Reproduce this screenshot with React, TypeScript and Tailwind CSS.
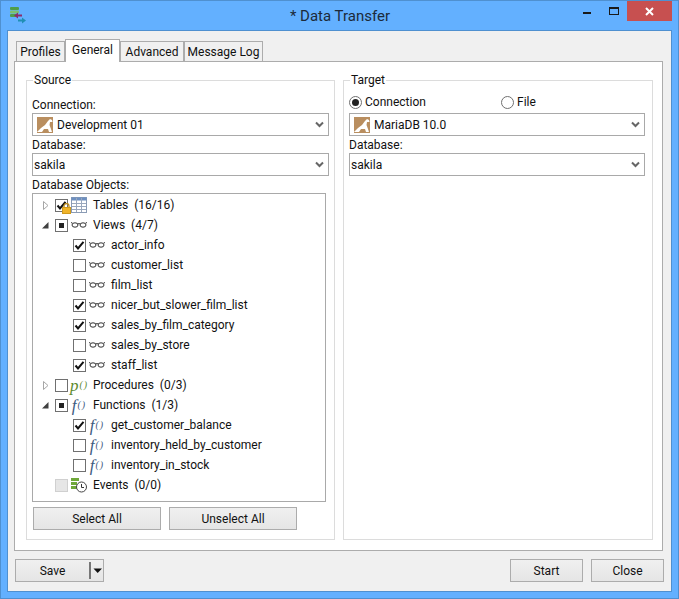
import type { ReactNode } from 'react';

type CheckState = 'on' | 'off' | 'partial' | 'disabled';
type IconKind = 'table' | 'view' | 'proc' | 'func' | 'event';

interface TreeRow {
  label: string;
  icon: IconKind;
  check: CheckState;
  child?: boolean;
  arrow?: 'open' | 'closed';
}

const rows: TreeRow[] = [
  { label: 'Tables  (16/16)', icon: 'table', check: 'on', arrow: 'closed' },
  { label: 'Views  (4/7)', icon: 'view', check: 'partial', arrow: 'open' },
  { label: 'actor_info', icon: 'view', check: 'on', child: true },
  { label: 'customer_list', icon: 'view', check: 'off', child: true },
  { label: 'film_list', icon: 'view', check: 'off', child: true },
  { label: 'nicer_but_slower_film_list', icon: 'view', check: 'on', child: true },
  { label: 'sales_by_film_category', icon: 'view', check: 'on', child: true },
  { label: 'sales_by_store', icon: 'view', check: 'off', child: true },
  { label: 'staff_list', icon: 'view', check: 'on', child: true },
  { label: 'Procedures  (0/3)', icon: 'proc', check: 'off', arrow: 'closed' },
  { label: 'Functions  (1/3)', icon: 'func', check: 'partial', arrow: 'open' },
  { label: 'get_customer_balance', icon: 'func', check: 'on', child: true },
  { label: 'inventory_held_by_customer', icon: 'func', check: 'off', child: true },
  { label: 'inventory_in_stock', icon: 'func', check: 'off', child: true },
  { label: 'Events  (0/0)', icon: 'event', check: 'disabled' },
];

function Walrus() {
  return (
    <svg width="16" height="16" viewBox="0 0 16 16" className="shrink-0">
      <rect width="16" height="16" fill="#b98e5f" />
      <path
        d="M0 15 L4 11 L8 8 L11 4 L13 2 L15 3 L15.5 5 L13 5 L12.5 8 L14 12 L15 15 L12 15 L11 12 L7 12 L5 15 Z"
        fill="#fff"
      />
    </svg>
  );
}

function Chevron() {
  return (
    <svg width="9" height="7" viewBox="0 0 9 7" className="shrink-0">
      <path d="M1 1.5 L4.5 5 L8 1.5" fill="none" stroke="#666" strokeWidth="2" />
    </svg>
  );
}

function Combo({ children, icon }: { children: ReactNode; icon?: boolean }) {
  return (
    <div className="flex h-[23px] items-center border border-[#a9a9a9] bg-white pr-[4px] pl-[1px]">
      {icon ? (
        <div className="ml-[3px] mr-[4px]">
          <Walrus />
        </div>
      ) : null}
      <span className="flex-1 leading-[20px]">{children}</span>
      <Chevron />
    </div>
  );
}

function Button({ children, className = '' }: { children: ReactNode; className?: string }) {
  return (
    <div
      className={`flex h-[23px] items-center justify-center border border-[#acacac] bg-gradient-to-b from-[#f0f0f0] to-[#e5e5e5] ${className}`}
    >
      {children}
    </div>
  );
}

function CheckBox({ state }: { state: CheckState }) {
  const border = state === 'disabled' ? 'border-[#d0d0d0] bg-[#e6e6e6]' : 'border-[#707070] bg-white';
  return (
    <div className={`relative flex h-[13px] w-[13px] shrink-0 items-center justify-center border ${border}`}>
      {state === 'on' ? (
        <svg width="13" height="13" viewBox="0 0 13 13" className="absolute -top-px -left-px">
          <path d="M2.5 6.5 L5 9.5 L10.5 2.8" fill="none" stroke="#111" strokeWidth="2" />
        </svg>
      ) : null}
      {state === 'partial' ? <div className="h-[5px] w-[5px] bg-[#222]" /> : null}
    </div>
  );
}

function RowIcon({ kind }: { kind: IconKind }) {
  if (kind === 'table') {
    return (
      <svg width="16" height="16" viewBox="0 0 16 16">
        <rect x="0.5" y="0.5" width="15" height="15" fill="#fff" stroke="#8a9bb5" />
        <rect x="0.5" y="0.5" width="15" height="3" fill="#6d8fc0" />
        <path d="M5.5 1 V15 M10.5 1 V15 M1 6.5 H15 M1 9.5 H15 M1 12.5 H15" stroke="#9aa8bd" />
      </svg>
    );
  }
  if (kind === 'view') {
    return (
      <svg width="16" height="16" viewBox="0 0 16 16">
        <path d="M1 6.5 L0.5 5 M15 6.5 L15.5 5 M6.5 7 Q8 6 9.5 7" fill="none" stroke="#444" />
        <ellipse cx="4" cy="8" rx="3" ry="2.2" fill="none" stroke="#333" />
        <ellipse cx="12" cy="8" rx="3" ry="2.2" fill="none" stroke="#333" />
      </svg>
    );
  }
  if (kind === 'event') {
    return (
      <svg width="16" height="16" viewBox="0 0 16 16">
        <rect x="0" y="1" width="8" height="3" fill="#6fa83a" />
        <rect x="0" y="5" width="6" height="3" fill="#6fa83a" />
        <rect x="0" y="9" width="6" height="3" fill="#6fa83a" />
        <circle cx="10.5" cy="10" r="5" fill="#fff" stroke="#444" />
        <path d="M10.5 7 V10.5 H13" fill="none" stroke="#333" />
      </svg>
    );
  }
  const color = kind === 'proc' ? 'text-[#5d8a2e]' : 'text-[#3d5a80]';
  const letter = kind === 'proc' ? 'p' : 'f';
  return (
    <span
      className={`flex h-[16px] w-[16px] items-center justify-center font-['Liberation_Serif',serif] text-[17px] italic leading-none whitespace-nowrap ${color}`}
    >
      {letter}
      <span className="ml-px text-[10px] tracking-[1px]">()</span>
    </span>
  );
}

function TreeLine({ row }: { row: TreeRow }) {
  return (
    <div className={`flex h-[20px] items-center ${row.child ? 'pl-[40px]' : 'pl-[22px]'}`}>
      {row.arrow ? (
        <div className="-ml-[14px] mr-[5px] flex w-[9px] justify-center">
          {row.arrow === 'closed' ? (
            <svg width="6" height="9" viewBox="0 0 6 9">
              <path d="M0.5 0.5 L5 4.5 L0.5 8.5 Z" fill="#fff" stroke="#a6a6a6" />
            </svg>
          ) : (
            <svg width="7" height="7" viewBox="0 0 7 7">
              <path d="M0 6.5 L6.5 6.5 L6.5 0 Z" fill="#404040" />
            </svg>
          )}
        </div>
      ) : null}
      <div className="relative flex items-center">
        <CheckBox state={row.check} />
        {row.icon === 'table' ? (
          <svg width="9" height="11" viewBox="0 0 9 11" className="absolute top-[4px] left-[7px]">
            <path d="M2 5 V3 a2.5 2.5 0 0 1 5 0 V5" fill="none" stroke="#b98a1c" strokeWidth="1.3" />
            <rect x="0.5" y="4.5" width="8" height="6" fill="#f0b429" stroke="#d09a1c" />
          </svg>
        ) : null}
      </div>
      <div className="ml-[3px] mr-[6px] h-[16px] w-[16px] shrink-0">
        <RowIcon kind={row.icon} />
      </div>
      <span className="whitespace-pre">{row.label}</span>
    </div>
  );
}

function GroupBox({ title, children, className = '' }: { title: string; children: ReactNode; className?: string }) {
  return (
    <div className={`relative border border-[#dcdcdc] ${className}`}>
      <span className="absolute -top-[9px] left-[6px] bg-white px-px leading-[16px]">{title}</span>
      {children}
    </div>
  );
}

function Radio({ on, label, className = '' }: { on?: boolean; label: string; className?: string }) {
  return (
    <div className={`flex h-[16px] items-center gap-[3px] ${className}`}>
      <div className="flex h-[13px] w-[13px] items-center justify-center rounded-full border border-[#707070] bg-white">
        {on ? <div className="h-[7px] w-[7px] rounded-full bg-[#222]" /> : null}
      </div>
      <span>{label}</span>
    </div>
  );
}

export default function App() {
  const tabs = ['Profiles', 'General', 'Advanced', 'Message Log'];
  return (
    <div className="flex h-[599px] w-[679px] flex-col border border-[#4f90d0] bg-[#63b0ff] font-['Roboto',sans-serif] text-[12px] leading-[16px] text-[#111]">
      {/* Title bar */}
      <div className="relative flex h-[29px] shrink-0 items-center justify-center">
        <svg width="18" height="18" viewBox="0 0 18 18" className="absolute top-[6px] left-[9px]">
          <rect x="0" y="0" width="9" height="3" rx="1" fill="#4f9d4a" />
          <rect x="0" y="3.5" width="9" height="3" rx="1" fill="#7cc06f" />
          <rect x="0" y="7" width="7" height="3" rx="1" fill="#4f9d4a" />
          <path d="M4 8.5 L8 5.5 V7.5 H12 V9.5 H8 V11.5 Z" fill="#8a2c6d" />
          <path d="M16 13.5 L12 10.5 V12.5 H8 V14.5 H12 V16.5 Z" fill="#1f8fb5" />
        </svg>
        <span className="pt-[1px] pl-[1px] text-[15px] leading-[20px] text-[#1c2a3a]">* Data Transfer</span>
        <div className="absolute top-0 right-[6px] flex items-start">
          <div className="flex h-[20px] w-[26px] items-center justify-center pt-[4px]">
            <div className="h-[2px] w-[8px] bg-[#1a1a1a]" />
          </div>
          <div className="flex h-[20px] w-[27px] items-center justify-center">
            <div className="h-[8px] w-[10px] border border-t-2 border-[#1a1a1a]" />
          </div>
          <div className="flex h-[20px] w-[45px] items-center justify-center bg-[#c75050]">
            <svg width="9" height="9" viewBox="0 0 9 9">
              <path d="M1 1 L8 8 M8 1 L1 8" stroke="#fff" strokeWidth="2" />
            </svg>
          </div>
        </div>
      </div>

      {/* Client area */}
      <div className="mx-[6px] flex min-h-0 flex-1 flex-col border border-[#4f90d0] bg-[#f0f0f0] pt-[10px] pr-[7px] pl-[6px]">
        <div className="flex h-[20px] items-end pl-[2px]">
          {tabs.map((tab) =>
            tab === 'General' ? (
              <div
                key={tab}
                className="relative z-10 -mb-px flex h-[23px] w-[55px] items-start justify-center border border-b-0 border-[#acacac] bg-white pt-[2px]"
              >
                {tab}
              </div>
            ) : (
              <div
                key={tab}
                className={`flex h-[20px] items-center justify-center border border-b-0 border-[#acacac] bg-[#f0f0f0] ${
                  tab === 'Profiles' ? 'w-[49px]' : tab === 'Advanced' ? 'w-[64px]' : 'w-[79px]'
                }`}
              >
                {tab}
              </div>
            ),
          )}
        </div>

        {/* Tab pane */}
        <div className="mr-px flex h-[490px] gap-[8px] border border-[#acacac] bg-white pt-[18px] pr-[9px] pl-[11px]">
          <GroupBox title="Source" className="h-[460px] w-[309px] px-[5px] pt-[16px]">
            <div>Connection:</div>
            <Combo icon>Development 01</Combo>
            <div className="mt-[1px]">Database:</div>
            <Combo>sakila</Combo>
            <div className="mt-[1px]">Database Objects:</div>
            <div className="h-[309px] w-[294px] border border-[#a9a9a9] bg-white pt-[1px]">
              {rows.map((row) => (
                <TreeLine key={row.label} row={row} />
              ))}
            </div>
            <div className="mt-[5px] flex gap-[8px] pl-[1px]">
              <Button className="w-[128px]">Select All</Button>
              <Button className="w-[128px]">Unselect All</Button>
            </div>
          </GroupBox>

          <GroupBox title="Target" className="h-[460px] w-[310px] px-[5px] pt-[13px]">
            <div className="flex h-[16px] items-center">
              <Radio on label="Connection" className="w-[152px]" />
              <Radio label="File" />
            </div>
            <div className="mt-[3px] w-[296px]">
              <Combo icon>MariaDB 10.0</Combo>
              <div className="mt-[1px]">Database:</div>
              <Combo>sakila</Combo>
            </div>
          </GroupBox>
        </div>

        {/* Footer */}
        <div className="flex items-center justify-between pt-[8px] pl-[1px]">
          <div className="flex h-[23px] w-[89px] items-center border border-[#acacac] bg-gradient-to-b from-[#f0f0f0] to-[#e5e5e5]">
            <span className="w-[73px] text-center">Save</span>
            <div className="h-[17px] w-[2px] bg-[#777]" />
            <svg width="10" height="6" viewBox="0 0 10 6" className="ml-[2px]">
              <path d="M0.5 0.5 H9 L4.7 5 Z" fill="#111" />
            </svg>
          </div>
          <div className="flex gap-[8px]">
            <Button className="w-[73px]">Start</Button>
            <Button className="w-[73px]">Close</Button>
          </div>
        </div>
      </div>
      <div className="h-[6px] shrink-0" />
    </div>
  );
}
